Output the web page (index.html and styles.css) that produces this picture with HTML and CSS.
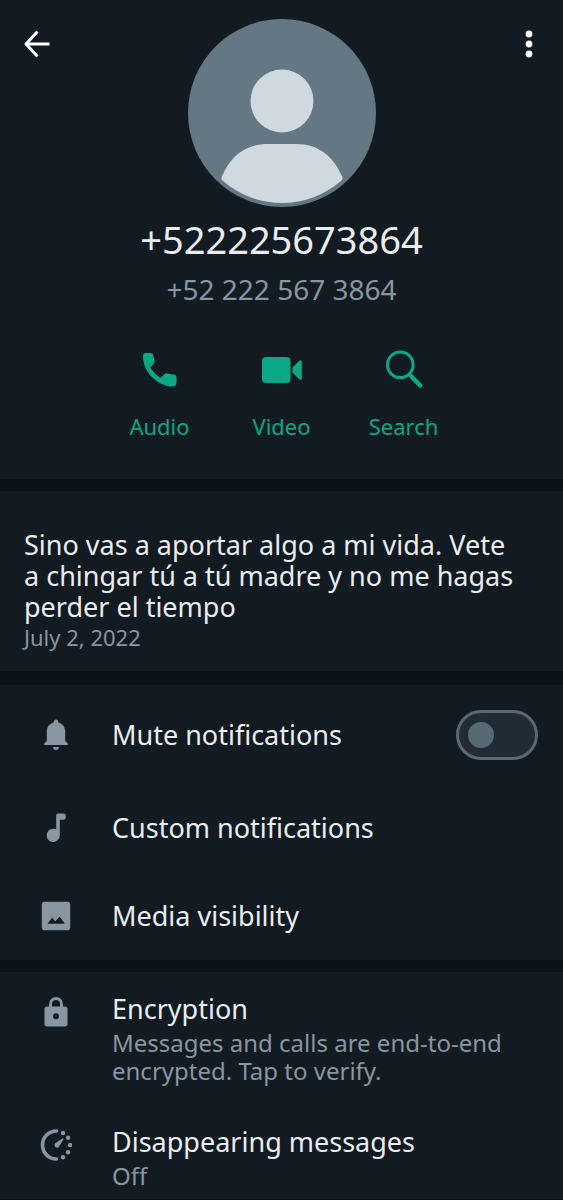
FILE: index.html
```html
<!DOCTYPE html>
<html lang="en">
<head>
<meta charset="utf-8">
<meta name="viewport" content="width=device-width, initial-scale=1">
<title>Contact info</title>
<link rel="stylesheet" href="styles.css">
</head>
<body>
<main class="page">
  <header class="panel hero">
    <button class="icon-button" type="button" aria-label="Back">
      <svg width="28" height="28" viewBox="0 0 28 28" fill="none" stroke="currentColor" stroke-width="3"><path d="M14.500 1.500 3 14l11.500 12.500M3 14h23.500" stroke-linejoin="round"/></svg>
    </button>
    <div class="identity">
      <svg class="avatar" viewBox="0 0 188 188" role="img" aria-label="Profile photo">
        <circle cx="94" cy="94" r="94" fill="#637883"/>
        <circle cx="94" cy="82" r="31.500" fill="#d0d8e0"/>
        <path d="M34.500 161.500Q32.800 160 33.800 157.800C42 138 57 125 80 125h28c23 0 38 13 46.200 32.800q1 2.200-.7 3.700A90 90 0 0 1 34.500 161.500z" fill="#d0d8e0"/>
      </svg>
      <h1 class="name">+522225673864</h1>
      <p class="phone">+52 222 567 3864</p>
      <div class="actions">
        <button class="action" type="button">
          <svg width="40" height="40" viewBox="0 0 40 40" fill="currentColor"><path d="M5.500 3h4.800c1.800 0 2.900.9 3.100 2.400.2 2 .6 3.600 1.100 5.200.3 1.100 0 2-.7 2.800l-3.500 4.200c2.500 4.300 5.900 7.700 10.300 10.200l3.900-3.600c.8-.7 1.700-1 2.800-.8 1.700.4 4 .8 6 1 1.900.2 3.200 1.100 3.200 2.900v5.500c0 2.400-1.100 3.700-3.200 3.700C17.500 36.500 3 22 3 6.200 3 4.100 3.800 3 5.500 3z"/></svg>
          <span>Audio</span>
        </button>
        <button class="action" type="button">
          <svg width="40" height="40" viewBox="0 0 40 40" fill="currentColor"><rect x="0" y="7" width="28.500" height="26" rx="4"/><path d="M30.500 17.500 37 11q2.800-2 2.800.8v16.400q0 2.800-2.800.8l-6.500-6.500z"/></svg>
          <span>Video</span>
        </button>
        <button class="action" type="button">
          <svg width="40" height="40" viewBox="0 0 40 40" fill="none" stroke="currentColor"><circle cx="16.300" cy="14.800" r="12.800" stroke-width="3"/><path d="m25.500 24.500 2.500 2.500" stroke-width="3"/><path d="m27.500 26.500 8.700 9" stroke-width="4.500" stroke-linecap="round"/></svg>
          <span>Search</span>
        </button>
      </div>
    </div>
    <button class="icon-button" type="button" aria-label="More options">
      <svg width="28" height="28" viewBox="0 0 28 28" fill="currentColor"><circle cx="14" cy="4" r="3.400"/><circle cx="14" cy="14" r="3.400"/><circle cx="14" cy="24" r="3.400"/></svg>
    </button>
  </header>

  <section class="panel about">
    <p class="about-text">Sino vas a aportar algo a mi vida. Vete a chingar tú a tú madre y no me hagas perder el tiempo</p>
    <p class="about-date">July 2, 2022</p>
  </section>

  <section class="panel settings">
    <div class="row row-switch">
      <svg class="row-icon" viewBox="0 0 32 32"><path d="M16 .5c1.400 0 2.300 1 2.300 2.300v.8c4.400 1.100 6.900 4.700 6.900 9v9.400l2.600 2.400q.6.600.2 1.200-.2.400-.8.400H4.800q-.6 0-.8-.4-.4-.6.2-1.200L6.800 22v-9.400c0-4.300 2.500-7.900 6.900-9v-.8C13.700 1.500 14.600.5 16 .5zM13 28h6c0 1.800-1.400 3-3 3s-3-1.200-3-3z"/></svg>
      <label class="row-title" for="mute">Mute notifications</label>
      <input class="switch" id="mute" type="checkbox" role="switch">
    </div>
    <a class="row" href="#custom">
      <svg class="row-icon" viewBox="0 0 32 32"><path d="M18 1.500h5.500q2.300 0 2.300 2.300v1.500q0 2.500-2.300 2.500h-3.700v15.400A6.600 6.600 0 1 1 16.200 17.500V3.300q0-1.800 1.800-1.800z"/></svg>
      <span class="row-title">Custom notifications</span>
    </a>
    <a class="row" href="#media">
      <svg class="row-icon" viewBox="0 0 32 32"><path fill-rule="evenodd" d="M4.600 1.800h22.800q2.800 0 2.800 2.800v22.800q0 2.800-2.800 2.800H4.600q-2.800 0-2.800-2.800V4.600q0-2.800 2.800-2.800zM7.500 23.800h17.300l-5.200-7.300-4.300 5-3.300-3.700z"/></svg>
      <span class="row-title">Media visibility</span>
    </a>
  </section>

  <section class="panel details">
    <a class="detail" href="#encryption">
      <svg class="row-icon" viewBox="0 0 32 32"><path fill-rule="evenodd" d="M7.200 10.500h1.900V8a6.900 6.900 0 0 1 13.800 0v2.500h1.900q2.700 0 2.700 2.700v14.600q0 2.700-2.700 2.700H7.200q-2.700 0-2.700-2.700V13.200q0-2.700 2.700-2.700zM12 10.500h8V8a4 4 0 0 0-8 0zM16 17.300a3 3 0 1 0 0 6 3 3 0 0 0 0-6z"/></svg>
      <span class="detail-text">
        <span class="row-title">Encryption</span>
        <span class="row-sub">Messages and calls are end-to-end encrypted. Tap to verify.</span>
      </span>
    </a>
    <a class="detail" href="#disappearing">
      <svg class="row-icon" viewBox="0 0 32 32"><path d="M16.500 2A14 14 0 1 0 16.500 30" fill="none" stroke="#8796a0" stroke-width="3.600" stroke-linecap="round"/><circle cx="23" cy="4" r="2.200"/><circle cx="28.100" cy="8.800" r="2.200"/><circle cx="30" cy="16" r="2.200"/><circle cx="28.100" cy="23.200" r="2.200"/><circle cx="23" cy="28.200" r="2.200"/><path d="M22.500 9.600q1.400-.6.800.8l-4.300 7.300c-2.200 2.900-6.300-1-3.600-3.600z"/></svg>
      <span class="detail-text">
        <span class="row-title">Disappearing messages</span>
        <span class="row-sub">Off</span>
      </span>
    </a>
  </section>
</main>
</body>
</html>
```
FILE: styles.css
```css
* {
  box-sizing: border-box;
}

body {
  margin: 0;
  background: #0b131a;
  color: #e9edf1;
  font-family: "Noto Sans", "Open Sans", sans-serif;
  font-weight: 400;
  font-size: 27px;
}

h1,
p {
  margin: 0;
  font-weight: inherit;
}

button {
  padding: 0;
  border: 0;
  background: none;
  color: inherit;
  font: inherit;
  cursor: pointer;
}

a {
  color: inherit;
  text-decoration: none;
}

svg {
  display: block;
  flex: none;
}

.panel {
  margin-bottom: 12px;
  background: #131b22;
}

.panel:last-child {
  margin-bottom: 0;
}

.hero {
  display: flex;
  justify-content: space-between;
  align-items: flex-start;
  padding: 19px 20px 38px;
}

.icon-button {
  flex: none;
  padding: 11px 0 11px 3px;
  color: #fff;
}

.identity {
  display: flex;
  flex-direction: column;
  align-items: center;
}

.avatar {
  width: 188px;
  height: 188px;
}

.name {
  margin-top: 7px;
  font-size: 38px;
  line-height: 50px;
}

.phone {
  margin-top: 6px;
  color: #8796a0;
  font-size: 28px;
  line-height: 38px;
}

.actions {
  display: flex;
  margin-top: 42px;
  color: #0aa884;
}

.action {
  display: flex;
  flex-direction: column;
  align-items: center;
  gap: 21px;
  width: 122px;
  font-size: 22px;
  line-height: 30px;
}

.about {
  margin-bottom: 14px;
  padding: 38px 48px 18px 24px;
}

.about-text {
  line-height: 31px;
}

.about-date {
  color: #8796a0;
  font-size: 22px;
  line-height: 31px;
}

.row {
  display: flex;
  align-items: center;
  gap: 40px;
  height: 88px;
  padding: 0 25px 0 40px;
}

.row-switch {
  height: 99px;
}

.row-icon {
  width: 32px;
  height: 32px;
  fill: #8796a0;
}

.row-title {
  flex: 1;
  line-height: 36px;
}

.switch {
  flex: none;
  display: flex;
  align-items: center;
  width: 82px;
  height: 50px;
  margin: 0;
  padding-left: 9px;
  border: 3px solid #596973;
  border-radius: 25px;
  background: #202c33;
  appearance: none;
  cursor: pointer;
}

.switch::before {
  content: "";
  width: 26px;
  height: 26px;
  border-radius: 50%;
  background: #596973;
}

.switch:checked {
  justify-content: flex-end;
  padding: 0 9px 0 0;
}

.details {
  display: flex;
  flex-direction: column;
  gap: 39px;
  padding: 19px 24px 9px 40px;
}

.detail {
  display: flex;
  gap: 40px;
}

.detail .row-icon {
  margin-top: 5px;
}

.detail-text {
  display: flex;
  flex-direction: column;
  gap: 2px;
}

.row-sub {
  color: #8796a0;
  font-size: 24px;
  line-height: 28px;
}
```
